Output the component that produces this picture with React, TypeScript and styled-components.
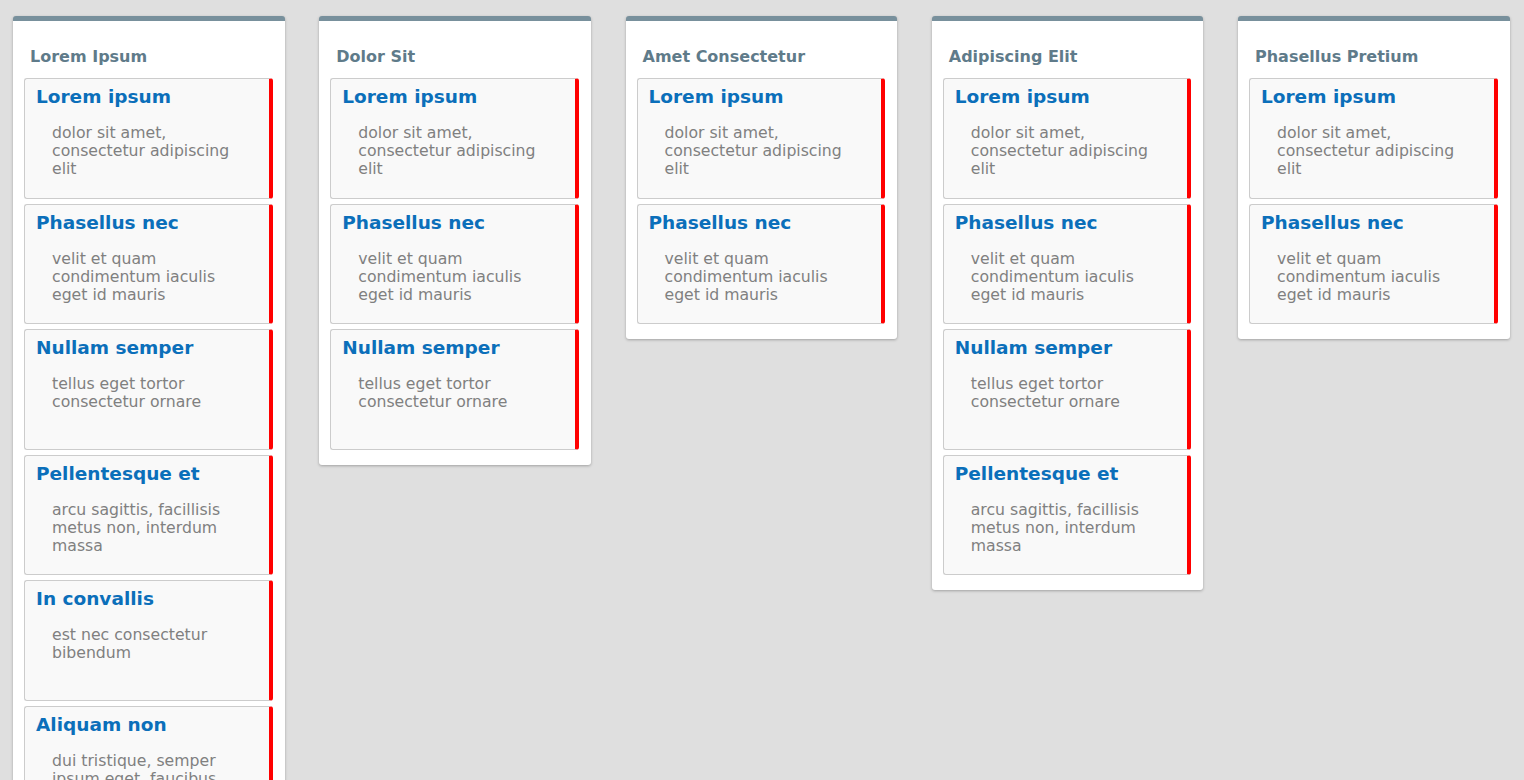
import React from "react";
import styled, { createGlobalStyle } from "styled-components";

const GlobalStyle = createGlobalStyle`
  html, body {
    margin: 0;
    padding: 0;
    background: #dfdfdf;
    font-family: "DejaVu Sans", Verdana, sans-serif;
  }
`;

type Card = { title: string; text: string };
type Column = { title: string; cards: Card[] };

const C: Record<string, Card> = {
  lorem: { title: "Lorem ipsum", text: "dolor sit amet, consectetur adipiscing elit" },
  phasellus: { title: "Phasellus nec", text: "velit et quam condimentum iaculis eget id mauris" },
  nullam: { title: "Nullam semper", text: "tellus eget tortor consectetur ornare" },
  pellentesque: { title: "Pellentesque et", text: "arcu sagittis, facillisis metus non, interdum massa" },
  convallis: { title: "In convallis", text: "est nec consectetur bibendum" },
  aliquam: { title: "Aliquam non", text: "dui tristique, semper ipsum eget, faucibus nunc" },
};

const columns: Column[] = [
  { title: "Lorem Ipsum", cards: [C.lorem, C.phasellus, C.nullam, C.pellentesque, C.convallis, C.aliquam] },
  { title: "Dolor Sit", cards: [C.lorem, C.phasellus, C.nullam] },
  { title: "Amet Consectetur", cards: [C.lorem, C.phasellus] },
  { title: "Adipiscing Elit", cards: [C.lorem, C.phasellus, C.nullam, C.pellentesque] },
  { title: "Phasellus Pretium", cards: [C.lorem, C.phasellus] },
];

const Board = styled.div`
  display: grid;
  grid-template-columns: repeat(5, 271.5px);
  column-gap: 34.75px;
  align-items: start;
  padding: 16px 0 0 13px;
`;

const Lane = styled.section`
  background: #ffffff;
  border-top: 5px solid #78909c;
  border-radius: 3px;
  box-shadow: 0 1px 3px rgba(0, 0, 0, 0.28);
  padding: 0 12px 10px 11px;
`;

const LaneTitle = styled.h2`
  margin: 0;
  padding: 26px 6px 12px;
  font-size: 16px;
  line-height: 19px;
  font-weight: bold;
  color: #5f7b8a;
`;

const CardBox = styled.article`
  box-sizing: border-box;
  height: 120.6px;
  margin-bottom: 5px;
  background: #f9f9f9;
  border: 1px solid #cccccc;
  border-right: 4px solid #ff0000;
  border-radius: 3px;
  padding: 7px 28px 0 11px;
`;

const CardTitle = styled.h3`
  margin: 0;
  font-size: 18.5px;
  line-height: 22px;
  font-weight: bold;
  color: #0b6fba;
  white-space: nowrap;
`;

const CardText = styled.p`
  margin: 16px 0 0 16px;
  font-size: 15.7px;
  line-height: 18px;
  color: #808080;
`;

export default function App() {
  return (
    <>
      <GlobalStyle />
      <Board>
        {columns.map((col) => (
          <Lane key={col.title}>
            <LaneTitle>{col.title}</LaneTitle>
            {col.cards.map((card, i) => (
              <CardBox key={i}>
                <CardTitle>{card.title}</CardTitle>
                <CardText>{card.text}</CardText>
              </CardBox>
            ))}
          </Lane>
        ))}
      </Board>
    </>
  );
}
